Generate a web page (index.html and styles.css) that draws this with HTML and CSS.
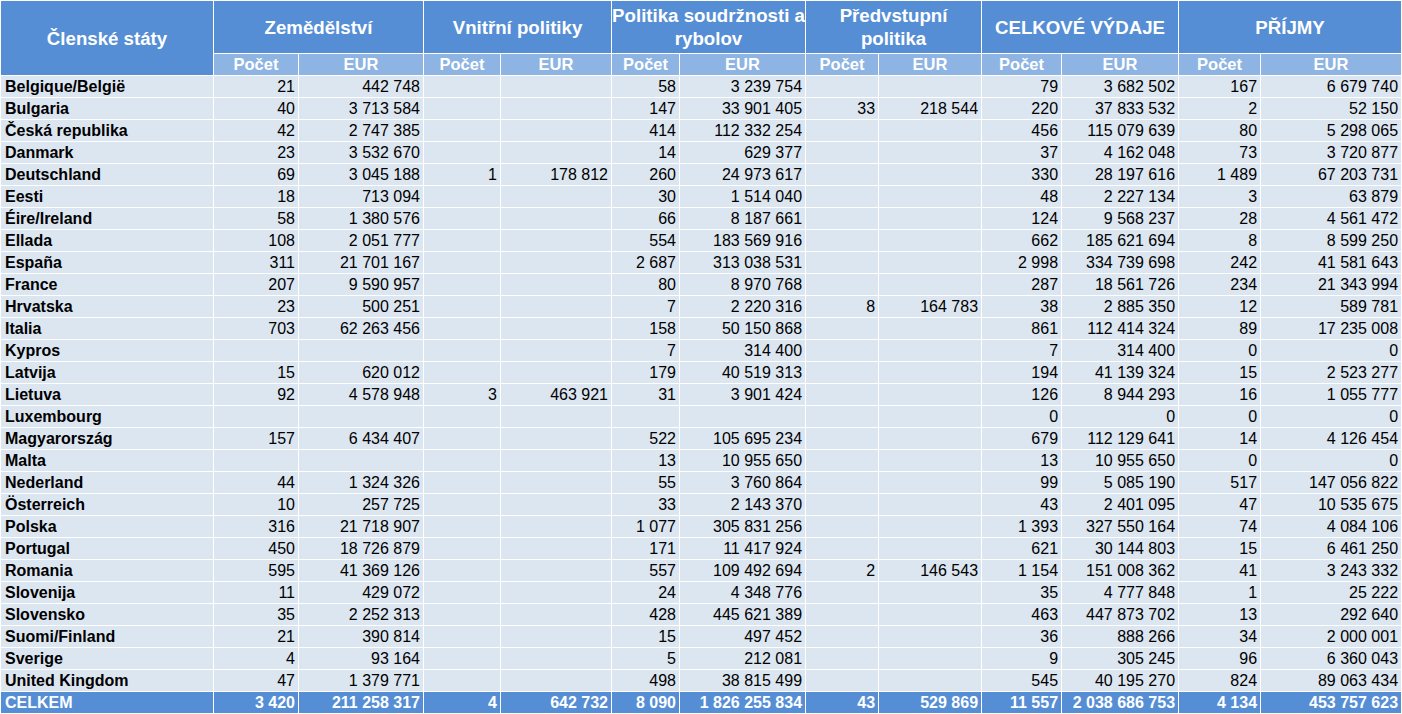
FILE: index.html
```html
<!DOCTYPE html>
<html lang="cs">
<head>
<meta charset="utf-8">
<title>Členské státy</title>
<link rel="stylesheet" href="styles.css">
</head>
<body>
<table class="grid">
<colgroup>
<col class="c0"><col class="c1"><col class="c2"><col class="c3"><col class="c4"><col class="c5"><col class="c6"><col class="c7"><col class="c8"><col class="c9"><col class="c10"><col class="c11"><col class="c12">
</colgroup>
<thead>
<tr class="h1">
<th rowspan="2" class="state">Členské státy</th>
<th colspan="2">Zemědělství</th>
<th colspan="2">Vnitřní politiky</th>
<th colspan="2">Politika soudržnosti a rybolov</th>
<th colspan="2">Předvstupní politika</th>
<th colspan="2">CELKOVÉ VÝDAJE</th>
<th colspan="2">PŘÍJMY</th>
</tr>
<tr class="h2">
<th>Počet</th><th>EUR</th><th>Počet</th><th>EUR</th><th>Počet</th><th>EUR</th><th>Počet</th><th>EUR</th><th>Počet</th><th>EUR</th><th>Počet</th><th>EUR</th>
</tr>
</thead>
<tbody>
<tr><td>Belgique/België</td><td>21</td><td>442 748</td><td></td><td></td><td>58</td><td>3 239 754</td><td></td><td></td><td>79</td><td>3 682 502</td><td>167</td><td>6 679 740</td></tr>
<tr><td>Bulgaria</td><td>40</td><td>3 713 584</td><td></td><td></td><td>147</td><td>33 901 405</td><td>33</td><td>218 544</td><td>220</td><td>37 833 532</td><td>2</td><td>52 150</td></tr>
<tr><td>Česká republika</td><td>42</td><td>2 747 385</td><td></td><td></td><td>414</td><td>112 332 254</td><td></td><td></td><td>456</td><td>115 079 639</td><td>80</td><td>5 298 065</td></tr>
<tr><td>Danmark</td><td>23</td><td>3 532 670</td><td></td><td></td><td>14</td><td>629 377</td><td></td><td></td><td>37</td><td>4 162 048</td><td>73</td><td>3 720 877</td></tr>
<tr><td>Deutschland</td><td>69</td><td>3 045 188</td><td>1</td><td>178 812</td><td>260</td><td>24 973 617</td><td></td><td></td><td>330</td><td>28 197 616</td><td>1 489</td><td>67 203 731</td></tr>
<tr><td>Eesti</td><td>18</td><td>713 094</td><td></td><td></td><td>30</td><td>1 514 040</td><td></td><td></td><td>48</td><td>2 227 134</td><td>3</td><td>63 879</td></tr>
<tr><td>Éire/Ireland</td><td>58</td><td>1 380 576</td><td></td><td></td><td>66</td><td>8 187 661</td><td></td><td></td><td>124</td><td>9 568 237</td><td>28</td><td>4 561 472</td></tr>
<tr><td>Ellada</td><td>108</td><td>2 051 777</td><td></td><td></td><td>554</td><td>183 569 916</td><td></td><td></td><td>662</td><td>185 621 694</td><td>8</td><td>8 599 250</td></tr>
<tr><td>España</td><td>311</td><td>21 701 167</td><td></td><td></td><td>2 687</td><td>313 038 531</td><td></td><td></td><td>2 998</td><td>334 739 698</td><td>242</td><td>41 581 643</td></tr>
<tr><td>France</td><td>207</td><td>9 590 957</td><td></td><td></td><td>80</td><td>8 970 768</td><td></td><td></td><td>287</td><td>18 561 726</td><td>234</td><td>21 343 994</td></tr>
<tr><td>Hrvatska</td><td>23</td><td>500 251</td><td></td><td></td><td>7</td><td>2 220 316</td><td>8</td><td>164 783</td><td>38</td><td>2 885 350</td><td>12</td><td>589 781</td></tr>
<tr><td>Italia</td><td>703</td><td>62 263 456</td><td></td><td></td><td>158</td><td>50 150 868</td><td></td><td></td><td>861</td><td>112 414 324</td><td>89</td><td>17 235 008</td></tr>
<tr><td>Kypros</td><td></td><td></td><td></td><td></td><td>7</td><td>314 400</td><td></td><td></td><td>7</td><td>314 400</td><td>0</td><td>0</td></tr>
<tr><td>Latvija</td><td>15</td><td>620 012</td><td></td><td></td><td>179</td><td>40 519 313</td><td></td><td></td><td>194</td><td>41 139 324</td><td>15</td><td>2 523 277</td></tr>
<tr><td>Lietuva</td><td>92</td><td>4 578 948</td><td>3</td><td>463 921</td><td>31</td><td>3 901 424</td><td></td><td></td><td>126</td><td>8 944 293</td><td>16</td><td>1 055 777</td></tr>
<tr><td>Luxembourg</td><td></td><td></td><td></td><td></td><td></td><td></td><td></td><td></td><td>0</td><td>0</td><td>0</td><td>0</td></tr>
<tr><td>Magyarország</td><td>157</td><td>6 434 407</td><td></td><td></td><td>522</td><td>105 695 234</td><td></td><td></td><td>679</td><td>112 129 641</td><td>14</td><td>4 126 454</td></tr>
<tr><td>Malta</td><td></td><td></td><td></td><td></td><td>13</td><td>10 955 650</td><td></td><td></td><td>13</td><td>10 955 650</td><td>0</td><td>0</td></tr>
<tr><td>Nederland</td><td>44</td><td>1 324 326</td><td></td><td></td><td>55</td><td>3 760 864</td><td></td><td></td><td>99</td><td>5 085 190</td><td>517</td><td>147 056 822</td></tr>
<tr><td>Österreich</td><td>10</td><td>257 725</td><td></td><td></td><td>33</td><td>2 143 370</td><td></td><td></td><td>43</td><td>2 401 095</td><td>47</td><td>10 535 675</td></tr>
<tr><td>Polska</td><td>316</td><td>21 718 907</td><td></td><td></td><td>1 077</td><td>305 831 256</td><td></td><td></td><td>1 393</td><td>327 550 164</td><td>74</td><td>4 084 106</td></tr>
<tr><td>Portugal</td><td>450</td><td>18 726 879</td><td></td><td></td><td>171</td><td>11 417 924</td><td></td><td></td><td>621</td><td>30 144 803</td><td>15</td><td>6 461 250</td></tr>
<tr><td>Romania</td><td>595</td><td>41 369 126</td><td></td><td></td><td>557</td><td>109 492 694</td><td>2</td><td>146 543</td><td>1 154</td><td>151 008 362</td><td>41</td><td>3 243 332</td></tr>
<tr><td>Slovenija</td><td>11</td><td>429 072</td><td></td><td></td><td>24</td><td>4 348 776</td><td></td><td></td><td>35</td><td>4 777 848</td><td>1</td><td>25 222</td></tr>
<tr><td>Slovensko</td><td>35</td><td>2 252 313</td><td></td><td></td><td>428</td><td>445 621 389</td><td></td><td></td><td>463</td><td>447 873 702</td><td>13</td><td>292 640</td></tr>
<tr><td>Suomi/Finland</td><td>21</td><td>390 814</td><td></td><td></td><td>15</td><td>497 452</td><td></td><td></td><td>36</td><td>888 266</td><td>34</td><td>2 000 001</td></tr>
<tr><td>Sverige</td><td>4</td><td>93 164</td><td></td><td></td><td>5</td><td>212 081</td><td></td><td></td><td>9</td><td>305 245</td><td>96</td><td>6 360 043</td></tr>
<tr><td>United Kingdom</td><td>47</td><td>1 379 771</td><td></td><td></td><td>498</td><td>38 815 499</td><td></td><td></td><td>545</td><td>40 195 270</td><td>824</td><td>89 063 434</td></tr>
<tr class="total"><td>CELKEM</td><td>3 420</td><td>211 258 317</td><td>4</td><td>642 732</td><td>8 090</td><td>1 826 255 834</td><td>43</td><td>529 869</td><td>11 557</td><td>2 038 686 753</td><td>4 134</td><td>453 757 623</td></tr>
</tbody>
</table>
</body>
</html>
```

FILE: styles.css
```css
html, body {
  margin: 0;
  padding: 0;
  background: #ffffff;
}

body {
  font-family: "Liberation Sans", Arial, sans-serif;
}

.grid {
  table-layout: fixed;
  width: 1401px;
  border-collapse: collapse;
  margin: 0;
}

.c0 { width: 213px; }
.c1 { width: 85px; }
.c2 { width: 125px; }
.c3 { width: 77px; }
.c4 { width: 111px; }
.c5 { width: 68px; }
.c6 { width: 126px; }
.c7 { width: 73px; }
.c8 { width: 103px; }
.c9 { width: 80px; }
.c10 { width: 117px; }
.c11 { width: 82px; }
.c12 { width: 141px; }

.grid th,
.grid td {
  border: 1px solid #ffffff;
  padding: 0;
  overflow: hidden;
  white-space: nowrap;
}

.h1 th {
  background: #558ed5;
  color: #ffffff;
  font-weight: bold;
  font-size: 18.67px;
  line-height: 23px;
  height: 52px;
  text-align: center;
  vertical-align: middle;
  white-space: normal;
  padding: 0;
}

.h2 th {
  background: #8db4e2;
  color: #ffffff;
  font-weight: bold;
  font-size: 16.5px;
  height: 21px;
  line-height: 21px;
  text-align: center;
}

.grid tbody td {
  background: #dce6f1;
  color: #000000;
  font-size: 16px;
  height: 21px;
  line-height: 21px;
  text-align: right;
  padding-right: 3px;
}

.grid tbody td:first-child {
  text-align: left;
  font-weight: bold;
  padding-left: 4px;
  padding-right: 0;
}

.grid tbody tr.total td {
  background: #558ed5;
  color: #ffffff;
  font-weight: bold;
}
```
